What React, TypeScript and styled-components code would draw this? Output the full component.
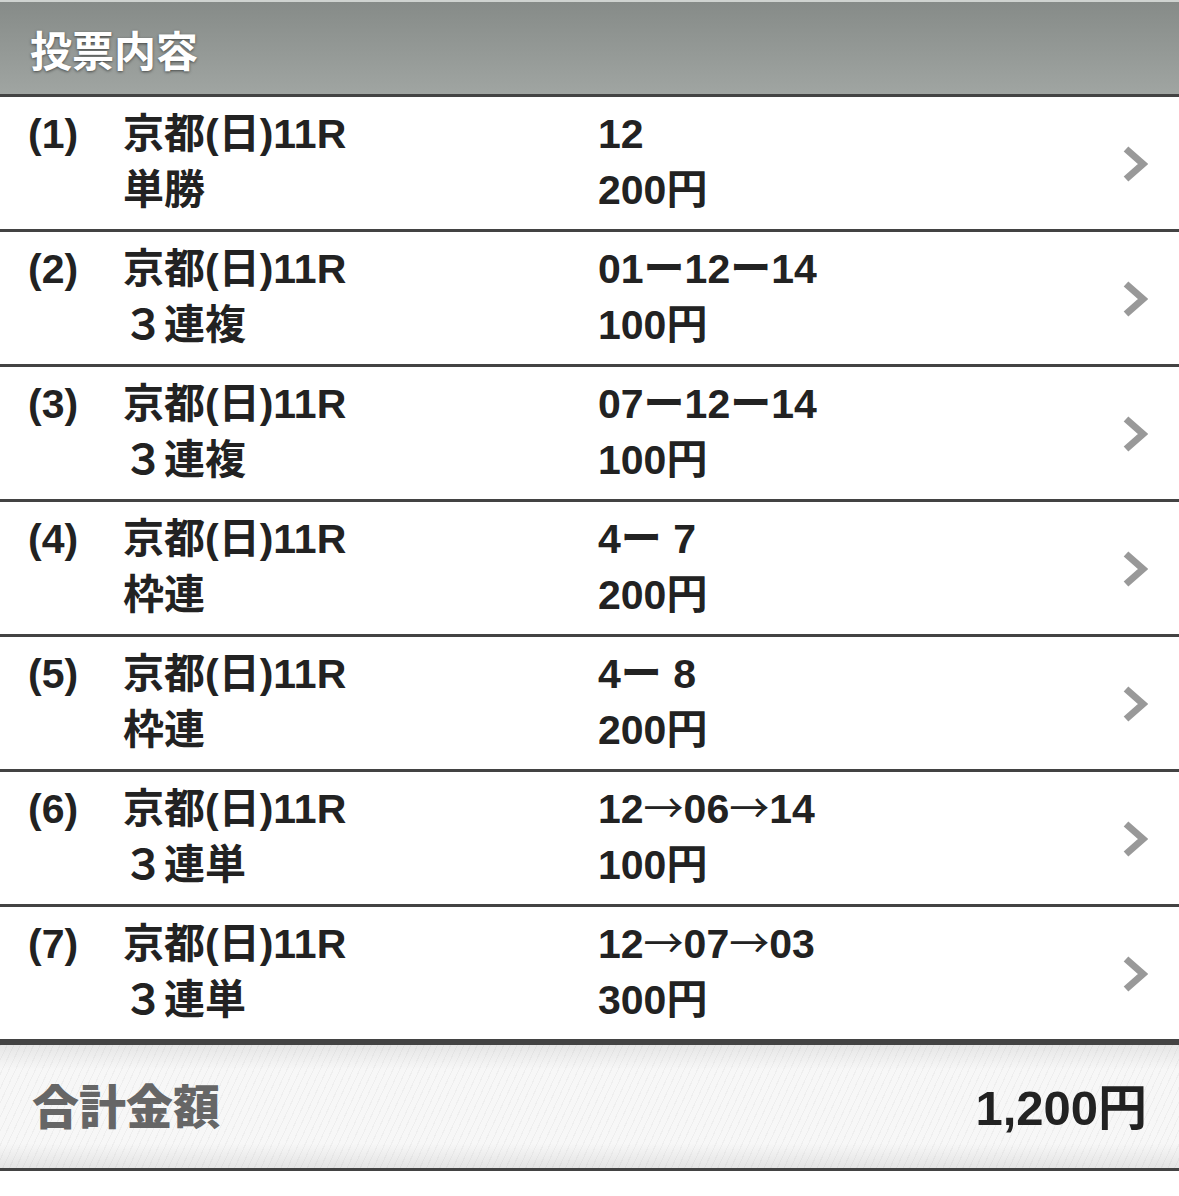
import React from "react";
import styled, { createGlobalStyle } from "styled-components";

const Global = createGlobalStyle`
  html, body { margin: 0; padding: 0; background: #fff; }
  body { font-family: "Liberation Sans", "Noto Sans CJK JP", sans-serif; }
`;

const Page = styled.div`
  width: 1179px;
  border-top: 2px solid #cfd3d0;
`;

const Header = styled.div`
  height: 92px;
  display: flex;
  align-items: center;
  padding-left: 30px;
  background: linear-gradient(#868b88, #a0a5a2);
  border-bottom: 3px solid #434343;
  color: #fff;
  font-family: "Noto Sans CJK JP", sans-serif;
  font-weight: 700;
  font-size: 42px;
  text-shadow: 0 1px 3px rgba(0, 0, 0, 0.55);
`;

const Row = styled.div`
  display: grid;
  grid-template-columns: 95px 475px 1fr 57px;
  align-items: center;
  padding: 9px 0 11px 28px;
  border-bottom: 3px solid #434343;
  color: #222;
  font-weight: 700;
  font-size: 41px;
  line-height: 56px;
`;

const Cell = styled.div`
  display: flex;
  flex-direction: column;
  align-self: stretch;
  white-space: pre;
`;

const Line = styled.span`
  height: 56px;
`;

const Arrow = styled.span`
  font-family: "Noto Sans CJK JP", sans-serif;
  font-weight: 400;
  font-size: 40px;
  line-height: 0;
`;

const Chevron = styled.svg`
  width: 26px;
  height: 36px;
  margin-top: 4px;
`;

const Footer = styled.div`
  height: 129px;
  box-sizing: border-box;
  display: flex;
  align-items: center;
  justify-content: space-between;
  padding: 0 32px 6px 32px;
  border-top: 3px solid #434343;
  border-bottom: 3px solid #434343;
  background:
    repeating-linear-gradient(
      115deg,
      rgba(0, 0, 0, 0.035) 0px,
      rgba(0, 0, 0, 0.035) 1px,
      transparent 1px,
      transparent 6px
    ),
    linear-gradient(#e6e6e6, #f7f7f7 20%, #f7f7f7 80%, #e4e4e4);
  font-weight: 700;
  font-size: 49px;
`;

const FooterLabel = styled.span`
  color: #666;
  font-family: "Noto Sans CJK JP", sans-serif;
  font-weight: 900;
  font-size: 47px;
`;

const FooterValue = styled.span`
  color: #222;
`;

const rows = [
  { n: "(1)", type: "単勝", bet: "12", amt: "200円" },
  { n: "(2)", type: "３連複", bet: "01ー12ー14", amt: "100円" },
  { n: "(3)", type: "３連複", bet: "07ー12ー14", amt: "100円" },
  { n: "(4)", type: "枠連", bet: "4ー 7", amt: "200円" },
  { n: "(5)", type: "枠連", bet: "4ー 8", amt: "200円" },
  { n: "(6)", type: "３連単", bet: "12→06→14", amt: "100円" },
  { n: "(7)", type: "３連単", bet: "12→07→03", amt: "300円" },
];

function Bet({ text }: { text: string }) {
  const parts = text.split("→");
  return (
    <Line>
      {parts.map((p, i) => (
        <React.Fragment key={i}>
          {i > 0 && <Arrow>→</Arrow>}
          {p}
        </React.Fragment>
      ))}
    </Line>
  );
}

export default function App() {
  return (
    <>
      <Global />
      <Page>
        <Header>投票内容</Header>
        {rows.map((r) => (
          <Row key={r.n}>
            <Cell>
              <Line>{r.n}</Line>
            </Cell>
            <Cell>
              <Line>京都(日)11R</Line>
              <Line>{r.type}</Line>
            </Cell>
            <Cell>
              <Bet text={r.bet} />
              <Line>{r.amt}</Line>
            </Cell>
            <Chevron viewBox="0 0 26 36">
              <path d="M4 3 L21 18 L4 33" fill="none" stroke="#999" strokeWidth="7" />
            </Chevron>
          </Row>
        ))}
        <Footer>
          <FooterLabel>合計金額</FooterLabel>
          <FooterValue>1,200円</FooterValue>
        </Footer>
      </Page>
    </>
  );
}
